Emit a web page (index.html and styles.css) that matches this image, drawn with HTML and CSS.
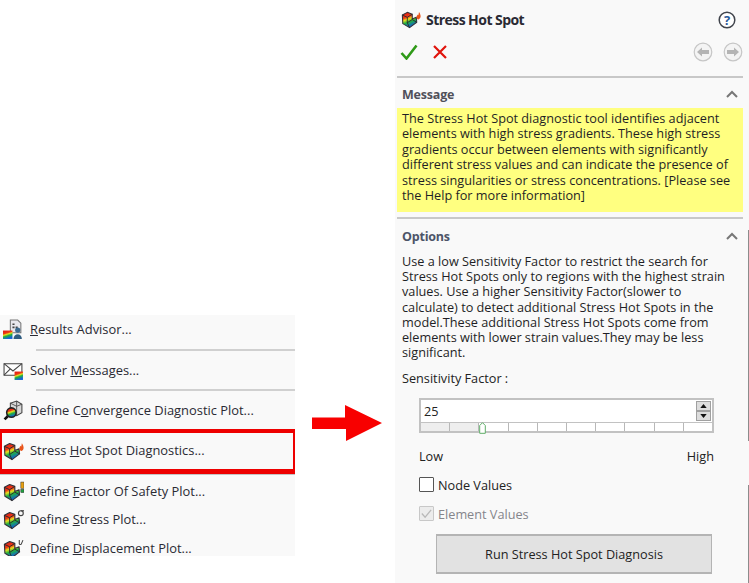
FILE: index.html
```html
<!DOCTYPE html>
<html lang="en">
<head>
<meta charset="utf-8">
<title>Stress Hot Spot</title>
<link rel="stylesheet" href="styles.css">
</head>
<body>
<svg class="defs" width="0" height="0" aria-hidden="true">
  <defs>
    <linearGradient id="rb" x1="0" y1="0" x2="0.35" y2="1">
      <stop offset="0" stop-color="#e01515"/>
      <stop offset=".38" stop-color="#ee3a15"/>
      <stop offset=".52" stop-color="#e8e020"/>
      <stop offset=".7" stop-color="#20b040"/>
      <stop offset="1" stop-color="#1060d8"/>
    </linearGradient>
    <symbol id="part" viewBox="0 0 20 20">
      <path d="M1.500 4.500L7 1.500l5.500 2V9l4.500-2 .5 5.500-8 6-7.500-4.500z" fill="url(#rb)" stroke="#33343a" stroke-width="1.200" stroke-linejoin="round"/>
      <path d="M1.500 4.500L7 7v6l5.500-3.500 5 3M7 7l5.500-3.500M7 13l2.500 5.500" fill="none" stroke="#2a2a2a" stroke-width="1"/>
    </symbol>
  </defs>
</svg>
<main class="stage">
  <section class="menu">
    <div class="item item-first">
      <svg class="ico" viewBox="0 0 20 20"><path d="M7 1h7l3 3v9H7z" fill="#e8e8ee" stroke="#777"/><path d="M9 5h2M9 8h2M12 8h2" stroke="#444" stroke-width="1.500"/><rect x="0" y="11" width="9" height="8" fill="url(#rb)"/><circle cx="14" cy="10.500" r="2.500" fill="#3b6a90"/><path d="M10 19c0-6 8-6 8 0z" fill="#2f5d82"/></svg>
      <span><u>R</u>esults Advisor...</span>
    </div>
    <div class="sep"></div>
    <div class="item item-mid">
      <svg class="ico" viewBox="0 0 20 20"><path d="M1 3.500h17v11H1z" fill="#fff" stroke="#444"/><path d="M1 3.500l8.500 7 8.500-7M1 14.500l6-6" fill="none" stroke="#444"/><rect x="11" y="11" width="8" height="8" fill="url(#rb)"/></svg>
      <span>Solver <u>M</u>essages...</span>
    </div>
    <div class="sep"></div>
    <div class="item item-mid">
      <svg class="ico" viewBox="0 0 20 20"><path d="M7 3l6-2 5 3v8l-5 3-6-2z" fill="#d8d8d8" stroke="#444"/><path d="M13 1v14M7 3l6 3 5-2" fill="none" stroke="#444" stroke-width=".8"/><circle cx="8" cy="12" r="4.500" fill="url(#rb)" stroke="#222" stroke-width="1.500"/><path d="M4.500 15.500L1.500 18.500" stroke="#111" stroke-width="2.500"/></svg>
      <span>Define C<u>o</u>nvergence Diagnostic Plot...</span>
    </div>
    <div class="item item-hot">
      <svg class="ico" viewBox="0 0 20 20"><use href="#part" width="18" height="18" y="2"/><path d="M18 3c2 3 2.500 6-.5 7.500-3-1-2-4-.5-5 0 1 .5 1 .5 0z" fill="#e8541a"/></svg>
      <span>Stress <u>H</u>ot Spot Diagnostics...</span>
    </div>
    <div class="item item-plot">
      <svg class="ico" viewBox="0 0 20 20"><use href="#part" width="18" height="18" y="2"/><rect x="17" y="1" width="3" height="6" fill="#e8a010" stroke="#333" stroke-width=".5"/><rect x="17" y="8" width="3" height="3" fill="#20a040" stroke="#333" stroke-width=".5"/></svg>
      <span>Define <u>F</u>actor Of Safety Plot...</span>
    </div>
    <div class="item item-plot-b">
      <svg class="ico" viewBox="0 0 20 20"><use href="#part" width="18" height="18" y="2"/><circle cx="17" cy="4" r="2.300" fill="none" stroke="#444" stroke-width="1.100"/><path d="M17 1.700h3" stroke="#444" stroke-width="1.100"/></svg>
      <span>Define <u>S</u>tress Plot...</span>
    </div>
    <div class="item item-plot-c">
      <svg class="ico" viewBox="0 0 20 20"><use href="#part" width="18" height="18" y="2"/><path d="M15.500 2v3.500c0 1 2 1 2 0L19 2" fill="none" stroke="#444" stroke-width="1"/></svg>
      <span>Define <u>D</u>isplacement Plot...</span>
    </div>
  </section>

  <div class="gutter">
    <svg class="arrow" viewBox="0 0 70 36"><path d="M0 12.500H33V0L70 18 34 36V24H0z" fill="#f80000"/></svg>
  </div>

  <aside class="panel">
    <header class="title-row">
      <svg class="title-ico" viewBox="0 0 20 20"><use href="#part" width="18" height="20"/><path d="M18 2c2 3 2.500 6-.5 7.500-3-1-2-4-.5-5 0 1 .5 1 .5 0z" fill="#e8541a"/></svg>
      <h1 class="title">Stress Hot Spot</h1>
      <svg class="help" viewBox="0 0 18 18"><circle cx="9" cy="9" r="7.800" fill="#fff" stroke="#40444c" stroke-width="1.500"/><text x="9" y="13.500" text-anchor="middle" class="help-q">?</text></svg>
    </header>
    <div class="action-row">
      <svg class="ok" viewBox="0 0 18 16"><path d="M1.500 9l5 5.500L16.500 1.500" fill="none" stroke="#2f9a18" stroke-width="2.600"/></svg>
      <svg class="cancel" viewBox="0 0 14 14"><path d="M1 1l12 12M13 1L1 13" fill="none" stroke="#e0140c" stroke-width="2.200"/></svg>
      <svg class="nav nav-back" viewBox="0 0 20 20"><circle cx="10" cy="10" r="8.800" fill="#f4f4f4" stroke="#c6c6c6" stroke-width="1.200"/><path d="M4 10l5-4.500V8h7v4H9v2.500z" fill="#b4b4b4"/></svg>
      <svg class="nav" viewBox="0 0 20 20"><circle cx="10" cy="10" r="8.800" fill="#f4f4f4" stroke="#c6c6c6" stroke-width="1.200"/><path d="M16 10l-5-4.500V8H4v4h7v2.500z" fill="#b4b4b4"/></svg>
    </div>

    <section class="group group-message">
      <div class="group-head">
        <h2 class="group-title">Message</h2>
        <svg class="chev" viewBox="0 0 12 8"><path d="M1 7l5-5 5 5" fill="none" stroke="#777" stroke-width="2"/></svg>
      </div>
      <p class="message">The Stress Hot Spot diagnostic tool identifies adjacent elements with high stress gradients. These high stress gradients occur between elements with significantly different stress values and can indicate the presence of stress singularities or stress concentrations. [Please see the Help for more information]</p>
    </section>

    <section class="group group-options">
      <div class="group-head">
        <h2 class="group-title group-title-blue">Options</h2>
        <svg class="chev" viewBox="0 0 12 8"><path d="M1 7l5-5 5 5" fill="none" stroke="#777" stroke-width="2"/></svg>
      </div>
      <p class="desc">Use a low Sensitivity Factor to restrict the search for Stress Hot Spots only to regions with the highest strain values. Use a higher Sensitivity Factor(slower to calculate) to detect additional Stress Hot Spots in the model.These additional Stress Hot Spots come from elements with lower strain values.They may be less significant.</p>
      <div class="field-label">Sensitivity Factor :</div>
      <div class="spin-box">
        <div class="spin-input">
          <span class="spin-value">25</span>
          <div class="spin-btns">
            <span class="spin-btn"><svg viewBox="0 0 8 5"><path d="M4 0l4 5H0z" fill="#111"/></svg></span>
            <span class="spin-btn"><svg viewBox="0 0 8 5"><path d="M4 5L8 0H0z" fill="#111"/></svg></span>
          </div>
        </div>
        <div class="slider">
          <i class="tick tick-on"></i><i class="tick tick-on"></i><i class="tick"></i><i class="tick"></i><i class="tick"></i><i class="tick"></i><i class="tick"></i><i class="tick"></i><i class="tick"></i><i class="tick"></i>
          <svg class="thumb" viewBox="0 0 7 12"><path d="M.700 3.500L3.500.700l2.800 2.800v7.800H.700z" fill="#fff" stroke="#5fae68"/></svg>
        </div>
      </div>
      <div class="range"><span>Low</span><span>High</span></div>
      <label class="check-row">
        <span class="box"></span>
        <span>Node Values</span>
      </label>
      <label class="check-row check-off">
        <span class="box box-off"><svg viewBox="0 0 14 14"><path d="M2 7l3.500 4L12 3" fill="none" stroke="#b8b8b8" stroke-width="1.300"/></svg></span>
        <span>Element Values</span>
      </label>
      <button class="run" type="button">Run Stress Hot Spot Diagnosis</button>
    </section>
    <span class="edge edge-upper"></span>
    <span class="edge edge-lower"></span>
  </aside>
</main>
</body>
</html>
```

FILE: styles.css
```css
* { box-sizing: border-box; }
html, body { margin: 0; height: 583px; overflow: hidden; background: #fff; }
body { font-family: "Open Sans", "Noto Sans", "Liberation Sans", sans-serif; font-size: 12.700px; color: #222; }
.defs { display: block; height: 0; }
.stage { display: flex; width: 749px; height: 583px; }

.menu { width: 295px; height: 241px; margin-top: 315px; background: #f9f9f9; overflow: hidden; }
.item { display: flex; align-items: center; gap: 6px; padding-left: 3px; font-size: 12.900px; }
.item span { white-space: nowrap; color: #2a2a33; }
.ico { width: 21px; height: 21px; flex: none; }
.item-first { height: 34px; padding-bottom: 6px; }
.item-mid { height: 38px; }
.sep { height: 2px; margin-left: 36px; background: #d0d0d0; }
.item-hot { height: 45px; padding: 0 0 2px 1px; border: solid #ee0000; border-width: 4px 2px 5px; box-shadow: 0 1px 0 #c4c4c4; }
.item-plot { height: 31px; padding-top: 3px; }
.item-plot-b { height: 28px; }
.item-plot-c { height: 30px; flex: none; }

.gutter { width: 100px; padding: 405px 0 0 17px; background: #fff; }
.arrow { display: block; width: 70px; height: 36px; }

.panel { position: relative; width: 354px; height: 583px; background: #f9f9f9; padding: 0 6px 0 2px; }
.edge { position: absolute; right: 0; width: 1px; background: #8c8c8c; }
.edge-upper { top: 230px; height: 211px; }
.edge-lower { top: 485px; height: 98px; }
.title-row { display: flex; align-items: center; height: 38px; padding: 1px 4px 0 4px; }
.title-ico { width: 20px; height: 20px; margin-right: 5px; }
.title { flex: 1; margin: 0; font-size: 14px; font-weight: 700; line-height: 20px; color: #2a2a33; letter-spacing: -.55px; }
.help { width: 18px; height: 18px; margin-right: 3px; }
.help-q { font: 700 13px "Open Sans", sans-serif; fill: #2a5a9a; }
.action-row { display: flex; align-items: center; height: 28px; padding-left: 3px; }
.ok { width: 18px; height: 16px; }
.cancel { width: 14px; height: 14px; margin-left: 15px; margin-right: auto; }
.nav { width: 20px; height: 20px; margin-left: 10px; }
.nav-back { margin-right: 0; }

.group { border-top: 2px solid #c8c8c8; width: 346px; }
.group-message { margin-top: 10px; height: 141px; }
.group-head { display: flex; align-items: center; justify-content: space-between; height: 30px; padding: 2px 5px 0; }
.group-title { margin: 0; font-size: 12.500px; font-weight: 700; color: #50505a; letter-spacing: -.2px; }
.group-title-blue { color: #4c5468; }
.chev { width: 12px; height: 8px; }
.message { margin: 0; height: 104px; padding: 3px 4px 0 5px; background: #ffff80; line-height: 15.400px; color: #1f1f25; }
.desc { margin: 0; padding: 0 5px; line-height: 15.200px; color: #1f1f25; }
.group-options { height: 370px; }
.group-options .group-head { height: 32px; padding-top: 2px; }
.group-options .desc { margin-top: 3px; }

.field-label { margin: 10px 0 0 5px; line-height: 16px; }
.spin-box { width: 295px; margin: 12px 0 0 22px; border: 2px solid #c2c2c2; background: #fff; }
.spin-input { display: flex; align-items: center; justify-content: space-between; height: 22px; padding: 0 1px 0 3px; }
.spin-value { color: #222; line-height: 20px; margin-bottom: 1px; }
.spin-btns { display: flex; flex-direction: column; width: 15px; }
.spin-btn { display: flex; align-items: center; justify-content: center; height: 10px; background: #ddd; border: 1px solid #a0a0a0; }
.spin-btn svg { width: 7px; height: 4px; }
.slider { position: relative; display: flex; height: 9px; border-top: 1px solid #c2c2c2; }
.tick { flex: 1; border-right: 1px solid #b8b8b8; }
.tick:last-of-type { border-right: 0; }
.tick-on { background: #eeeeee; }
.thumb { position: absolute; left: 58px; top: -1px; width: 7px; height: 12px; }

.range { display: flex; justify-content: space-between; width: 295px; margin: 15px 0 0 22px; line-height: 17px; }
.check-row { display: flex; align-items: center; gap: 4px; margin: 12px 0 0 22px; height: 17px; }
.range + .check-row { margin-top: 11px; }
.box { width: 15px; height: 15px; background: #fff; border: 1px solid #555; border-radius: 1px; }
.box-off { background: #ececec; border-color: #c8c8c8; }
.box-off svg { display: block; width: 13px; height: 13px; }
.check-off span { color: #85858b; }
.run { display: block; width: 276px; height: 40px; margin: 12px 0 0 39px; padding: 0; background: #e2e2e2; border: 1px solid #b4b4b4; border-width: 2px 1px; font: 12.700px "Open Sans", sans-serif; color: #222; }
```
